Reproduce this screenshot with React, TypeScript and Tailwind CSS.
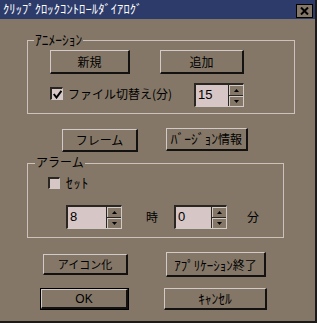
import React from "react";

const face = "bg-[#847767]";

function Btn({ label, className }: { label: React.ReactNode; className: string }) {
  return (
    <div
      className={`${className} ${face} flex items-center justify-center border-t border-l border-b-2 border-r-2 border-t-[#d2cac6] border-l-[#d2cac6] border-b-[#141210] border-r-[#141210]`}
    >
      {label}
    </div>
  );
}

function Check({ checked, className }: { checked: boolean; className: string }) {
  return (
    <div
      className={`${className} bg-[#d6c6c6] border-t-2 border-l-2 border-b border-r border-t-[#2a2622] border-l-[#2a2622] border-b-[#d2cac6] border-r-[#d2cac6] flex items-center justify-center`}
    >
      {checked && (
        <svg width="9" height="9" viewBox="0 0 9 9">
          <path d="M0.8 4 L3.5 7.5 L8.4 0.8" fill="none" stroke="#000" strokeWidth="2" />
        </svg>
      )}
    </div>
  );
}

function Spin({ value, className }: { value: string; className: string }) {
  return (
    <div
      className={`${className} h-[24px] flex border-t-2 border-l-2 border-b border-r border-t-[#2a2622] border-l-[#2a2622] border-b-[#d2cac6] border-r-[#d2cac6]`}
    >
      <div className="flex-1 bg-[#d6c6c6] pl-[2px] pt-[3px] font-['Liberation_Sans',sans-serif] text-[13px]">
        {value}
      </div>
      <div className="w-[15px] flex flex-col gap-[1px] bg-[#2a2622] pl-[1px]">
        <div className={`flex-1 ${face} border-t border-l border-t-[#d2cac6] border-l-[#d2cac6] flex items-center justify-center`}>
          <svg width="5" height="3" viewBox="0 0 5 3">
            <path d="M2.5 0 L5 3 L0 3 Z" fill="#000" />
          </svg>
        </div>
        <div className={`flex-1 ${face} border-t border-l border-t-[#d2cac6] border-l-[#d2cac6] flex items-center justify-center`}>
          <svg width="5" height="3" viewBox="0 0 5 3">
            <path d="M0 0 L5 0 L2.5 3 Z" fill="#000" />
          </svg>
        </div>
      </div>
    </div>
  );
}

export default function App() {
  return (
    <div
      className={`w-[317px] h-[323px] ${face} border-r-2 border-b-2 border-[#1c1a18] flex flex-col overflow-hidden text-[12px] leading-none text-black font-['Noto_Sans_CJK_JP',sans-serif]`}
    >
      {/* Title bar */}
      <div className="h-[19px] bg-[#2d3b6b] flex justify-between pl-[3px] pr-[2px]">
        <span className="self-center text-white text-[12.5px] tracking-[0.1px]">
          ｸﾘｯﾌﾟｸﾛｯｸｺﾝﾄﾛｰﾙﾀﾞｲｱﾛｸﾞ
        </span>
        <div className={`mt-[4px] w-[17px] h-[14px] ${face} border border-black flex items-center justify-center`}>
          <svg width="9" height="8" viewBox="0 0 9 8">
            <path d="M1 0.5 L8 7.5 M8 0.5 L1 7.5" stroke="#000" strokeWidth="2" />
          </svg>
        </div>
      </div>

      <div className="flex flex-col pl-[27px]">
        {/* Animation group */}
        <div className="relative mt-[21px] w-[268px] h-[74px] border border-[#cbc3bb] pl-[22px] pt-[9px]">
          <span className={`absolute left-[6px] -top-[8px] px-[1px] ${face} text-[13.5px]`}>
            ｱﾆﾒｰｼｮﾝ
          </span>
          <div className="flex gap-[30px]">
            <Btn label="新規" className="w-[80px] h-[24px]" />
            <Btn label="追加" className="w-[84px] h-[24px]" />
          </div>
          <div className="flex items-start mt-[9px]">
            <Check checked className="mt-[4px] w-[13px] h-[13px]" />
            <span className="ml-[5px] w-[126px] mt-[5px]">ファイル切替え(分)</span>
            <Spin value="15" className="w-[50px]" />
          </div>
        </div>

        {/* Frame / version */}
        <div className="flex items-start mt-[14px] pl-[35px]">
          <Btn label="フレーム" className="mt-[1px] w-[76px] h-[23px]" />
          <Btn
            label={<span className="text-[13.5px]">ﾊﾞｰｼﾞｮﾝ<span className="text-[12px]">情報</span></span>}
            className="ml-[28px] w-[82px] h-[23px]"
          />
        </div>

        {/* Alarm group */}
        <div className="relative mt-[11px] w-[257px] h-[75px] border border-[#cbc3bb] pl-[20px] pt-[12px]">
          <span className={`absolute left-[7px] -top-[8px] px-[1px] ${face}`}>アラーム</span>
          <div className="flex items-center">
            <Check checked={false} className="w-[12px] h-[12px]" />
            <span className="ml-[6px] text-[13.5px] tracking-[1px]">ｾｯﾄ</span>
          </div>
          <div className="flex items-center mt-[15px]">
            <Spin value="8" className="ml-[18px] w-[56px]" />
            <span className="ml-[24px]">時</span>
            <Spin value="0" className="ml-[16px] w-[53px]" />
            <span className="ml-[20px]">分</span>
          </div>
        </div>

        {/* Bottom buttons */}
        <div className="flex items-center mt-[14px]">
          <Btn label={<span className="text-[11px]">アイコン化</span>} className="ml-[16px] w-[85px] h-[21px]" />
          <Btn
            label={<span className="text-[13px]">ｱﾌﾟﾘｹｰｼｮﾝ<span className="text-[12px]">終了</span></span>}
            className="ml-[38px] w-[100px] h-[25px]"
          />
        </div>
        <div className="flex items-center mt-[11px]">
          <div className="ml-[13px] w-[89px] h-[22px] border border-black flex">
            <Btn label={<span className="font-['Liberation_Sans',sans-serif] text-[12px]">OK</span>} className="flex-1" />
          </div>
          <Btn label={<span className="text-[13.5px]">ｷｬﾝｾﾙ</span>} className="ml-[35px] w-[103px] h-[22px]" />
        </div>
      </div>
    </div>
  );
}
